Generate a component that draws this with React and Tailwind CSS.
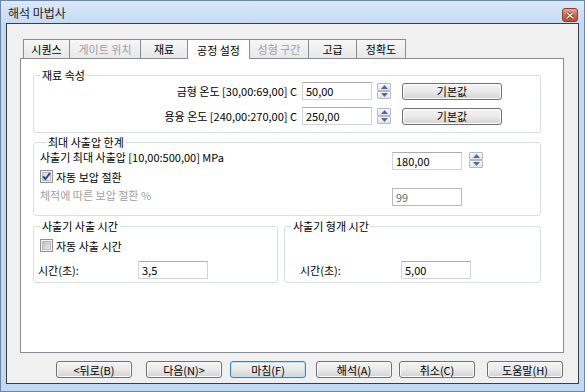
import React from 'react'

const FONT = "font-['Noto_Sans_CJK_KR','Noto_Sans',sans-serif]"

function Tri({ up }) {
  return (
    <svg width="7" height="4" viewBox="0 0 7 4">
      {up ? <path d="M0 4 L3.5 0 L7 4 Z" fill="#4d6aa6" /> : <path d="M0 0 L3.5 4 L7 0 Z" fill="#4d6aa6" />}
    </svg>
  )
}

function Spinner() {
  return (
    <div className="flex flex-col w-[14px] h-[16px]">
      <div className="h-[8px] border border-[#b3bac6] rounded-[1px] bg-gradient-to-b from-[#fbfbfb] to-[#e2e4e8] flex items-center justify-center">
        <Tri up />
      </div>
      <div className="h-[8px] border border-[#b3bac6] rounded-[1px] bg-gradient-to-b from-[#fbfbfb] to-[#e2e4e8] flex items-center justify-center">
        <Tri />
      </div>
    </div>
  )
}

function Field({ value, disabled }) {
  return (
    <div
      className={`w-[70px] h-[18px] shrink-0 flex items-center pl-[3px] text-[11px] leading-[14px] border bg-white
        ${disabled ? 'border-[#b9b9b9] text-[#6d6d6d]' : 'border-[#cfd4db] border-t-[#abadb3] text-black'}`}
    >
      {value}
    </div>
  )
}

function Check({ checked }) {
  const id = checked ? 'cg1' : 'cg2'
  return (
    <svg width="13" height="13" viewBox="0 0 13 13" className="shrink-0">
      <defs>
        <linearGradient id={id} x1="0" y1="0" x2="1" y2="1">
          <stop offset="0" stopColor={checked ? '#cfd6e0' : '#b9bcc2'} />
          <stop offset="1" stopColor={checked ? '#f5f7fa' : '#eeeeee'} />
        </linearGradient>
      </defs>
      <rect x="0.5" y="0.5" width="12" height="12" fill="#f4f4f4" stroke="#8e8f8f" />
      <rect x="2.5" y="2.5" width="8" height="8" fill={`url(#${id})`} stroke="#b6bac0" />
      {checked && <path d="M3 6.3 L5.4 9 L10 3.2" stroke="#27468a" strokeWidth="1.9" fill="none" />}
    </svg>
  )
}

function Btn({ children, def, className = '' }) {
  return (
    <div
      className={`w-[76px] h-[17px] shrink-0 rounded-[3px] border flex items-center justify-center text-[11px] leading-[14px] text-black
        bg-gradient-to-b from-[#f4f4f4] via-[#e9e9e9] to-[#d3d3d3]
        ${def ? 'border-[#3c7fb1] shadow-[inset_0_0_0_1px_#bfe3f8]' : 'border-[#707070] shadow-[inset_0_0_0_1px_#fbfbfb]'} ${className}`}
    >
      {children}
    </div>
  )
}

function Tab({ label, w, active, disabled, first }) {
  return (
    <div
      className={`${w} ${first ? '' : '-ml-px'} border border-b-0 border-[#898c95] flex items-center justify-center text-[11px] leading-[14px]
        ${active ? 'h-[20px] -mb-px relative z-10 bg-white' : 'h-[19px] bg-gradient-to-b from-[#f7f7f7] to-[#e8e8e8]'}
        ${disabled ? 'text-[#a0a0a0]' : 'text-black'}`}
    >
      {label}
    </div>
  )
}

function Group({ title, className = '', children }) {
  return (
    <fieldset className={`border border-[#d5dfe5] rounded-[3px] ${className}`}>
      <legend className="ml-[6px] px-[2px] text-[11px] leading-[14px] text-black">{title}</legend>
      {children}
    </fieldset>
  )
}

export default function App() {
  return (
    <div className={`w-[585px] h-[392px] border border-[#6b86ad] bg-[#c3d9f2] flex flex-col ${FONT}`}>
      {/* Title bar */}
      <div className="h-[22px] flex justify-between pl-[7px] pr-[6px] bg-gradient-to-b from-[#dbe9f9] to-[#c6dbf3]">
        <span className="pt-[5px] text-[12px] leading-[14px] text-[#1e1e1e]">해석 마법사</span>
        <div className="mt-[7px] w-[16px] h-[14px] rounded-[3px] border border-[#8a3b2b] bg-gradient-to-b from-[#eba894] via-[#d4694f] to-[#c0472c] flex items-center justify-center">
          <svg width="8" height="7" viewBox="0 0 8 7">
            <path d="M1 1 L7 6 M7 1 L1 6" stroke="#5a2016" strokeWidth="2.6" strokeLinecap="square" />
            <path d="M1 1 L7 6 M7 1 L1 6" stroke="#ffffff" strokeWidth="1.4" strokeLinecap="square" />
          </svg>
        </div>
      </div>

      {/* Dialog body */}
      <div className="ml-[5px] w-[573px] h-[361px] border border-[#3a3d42] bg-[#f0f0f0] flex flex-col pt-[15px] pl-[13px] pr-[14px] pb-[5px]">
        {/* Tabs */}
        <div className="flex items-end pl-[3px] h-[19px]">
          <Tab first w="w-[47px]" label="시퀀스" />
          <Tab w="w-[72px]" label="게이트 위치" disabled />
          <Tab w="w-[48px]" label="재료" />
          <Tab w="w-[63px]" label="공정 설정" active />
          <Tab w="w-[60px]" label="성형 구간" disabled />
          <Tab w="w-[49px]" label="고급" />
          <Tab w="w-[50px]" label="정확도" />
        </div>

        {/* Tab page */}
        <div className="w-[544px] h-[295px] border border-[#898c95] bg-white pt-[9px] pl-[12px] flex flex-col text-[11px] leading-[14px] text-black">
          <Group title="재료 속성" className="w-[508px] pb-[7px]">
            <div className="flex items-center h-[18px]">
              <span className="w-[263px] text-right">금형 온도 [30,00:69,00] C</span>
              <div className="ml-[5px]"><Field value="50,00" /></div>
              <div className="ml-[5px]"><Spinner /></div>
              <Btn className="ml-[11px] !w-[100px]">기본값</Btn>
            </div>
            <div className="flex items-center h-[18px] mt-[7px]">
              <span className="w-[263px] text-right">용융 온도 [240,00:270,00] C</span>
              <div className="ml-[5px]"><Field value="250,00" /></div>
              <div className="ml-[5px]"><Spinner /></div>
              <Btn className="ml-[11px] !w-[100px]">기본값</Btn>
            </div>
          </Group>

          <Group title="최대 사출압 한계" className="w-[508px] mt-[2px] pl-[6px] pb-[9px]">
            <div className="flex items-start h-[20px] mt-[1px]">
              <span className="w-[352px]">사출기 최대 사출압 [10,00:500,00] MPa</span>
              <div className="mt-[2px]"><Field value="180,00" /></div>
              <div className="mt-[2px] ml-[7px]"><Spinner /></div>
            </div>
            <div className="flex items-center h-[13px] gap-[3px]">
              <Check checked />
              <span>자동 보압 절환</span>
            </div>
            <div className="flex items-start h-[18px] mt-[5px]">
              <span className="w-[352px] text-[#a0a0a0]">체적에 따른 보압 절환 %</span>
              <Field value="99" disabled />
            </div>
          </Group>

          <div className="flex mt-[3px]">
            <Group title="사출기 사출 시간" className="w-[245px] pb-[3px]">
              <div className="flex items-center h-[13px] gap-[3px] mt-[6px] pl-[6px]">
                <Check />
                <span>자동 사출 시간</span>
              </div>
              <div className="flex items-center h-[18px] mt-[9px] pl-[4px]">
                <span className="w-[100px]">시간(초):</span>
                <Field value="3,5" />
              </div>
            </Group>
            <Group title="사출기 형개 시간" className="w-[257px] ml-[6px] pb-[3px]">
              <div className="h-[13px] mt-[6px]" />
              <div className="flex items-center h-[18px] mt-[9px] pl-[15px]">
                <span className="w-[101px]">시간(초):</span>
                <Field value="5,00" />
              </div>
            </Group>
          </div>
        </div>

        {/* Wizard buttons */}
        <div className="flex mt-[8px] pl-[36px]">
          <Btn>&lt;뒤로(B)</Btn>
          <Btn className="ml-[14px]">다음(N)&gt;</Btn>
          <Btn def className="ml-[8px]">마침(F)</Btn>
          <Btn className="ml-[10px]">해석(A)</Btn>
          <Btn className="ml-[7px]">취소(C)</Btn>
          <Btn className="ml-[12px]">도움말(H)</Btn>
        </div>
      </div>
    </div>
  )
}
